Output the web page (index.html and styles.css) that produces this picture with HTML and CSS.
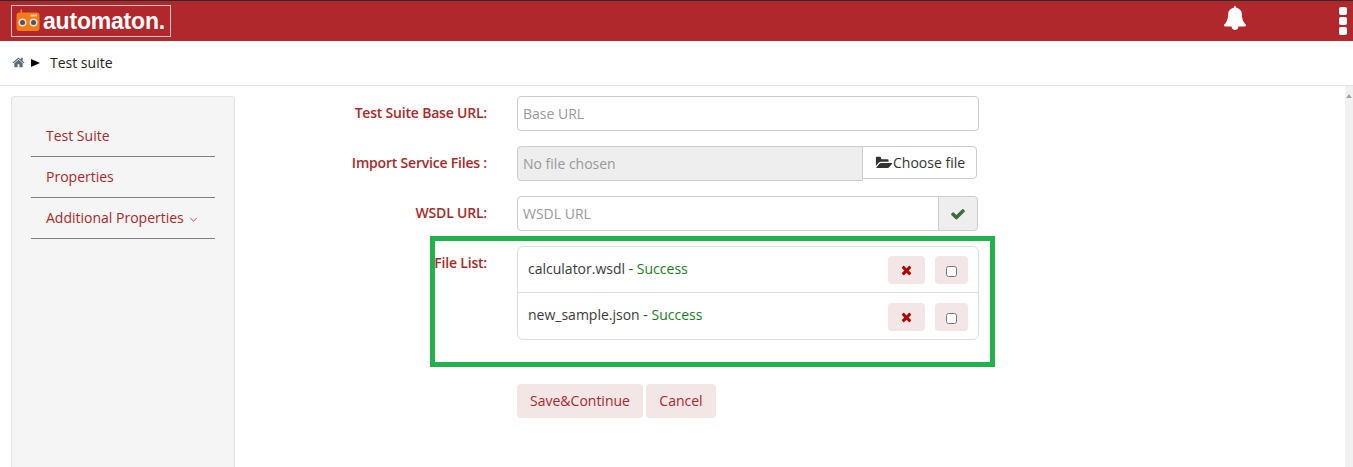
FILE: index.html
```html
<!DOCTYPE html>
<html lang="en">
<head>
<meta charset="utf-8">
<title>automaton</title>
<link rel="stylesheet" href="styles.css">
</head>
<body>
<header class="topbar">
  <div class="logo">
    <svg class="logo-icon" viewBox="0 0 24 24" width="24" height="24" aria-hidden="true">
      <rect x="0.500" y="3.500" width="23" height="18.500" rx="3" fill="#f47b16"/>
      <rect x="4.500" y="0.500" width="1.600" height="4" fill="#f47b16"/>
      <rect x="14.500" y="5.500" width="6.500" height="2" fill="#f9c9a0"/>
      <circle cx="6.500" cy="13.500" r="4" fill="#ddd"/>
      <circle cx="6.500" cy="13.500" r="2.500" fill="#555"/>
      <circle cx="17.500" cy="13.500" r="4" fill="#ddd"/>
      <circle cx="17.500" cy="13.500" r="2.500" fill="#555"/>
    </svg>
    <span class="logo-text">automaton.</span>
  </div>
  <svg class="bell" viewBox="0 0 1792 1792" width="24" height="24" aria-hidden="true"><path fill="#fff" d="M1728 1408q0 52-38 90t-90 38h-448q0 106-75 181t-181 75-181-75-75-181h-448q-52 0-90-38t-38-90q50-42 91-88t85-119.500 74.500-158.500 50-206 19.500-260q0-152 117-282.500t307-158.500q-8-19-8-39 0-40 28-68t68-28 68 28 28 68q0 20-8 39 190 28 307 158.500t117 282.500q0 139 19.500 260t50 206 74.500 158.500 85 119.500 91 88z"/></svg>
  <div class="kebab"><span></span><span></span><span></span></div>
</header>
<nav class="crumbs">
  <svg class="home" viewBox="0 0 1792 1792" width="13" height="13" aria-hidden="true"><path fill="#5f6b73" d="M1472 992v480q0 26-19 45t-45 19h-384v-384h-256v384h-384q-26 0-45-19t-19-45v-480q0-1 .5-3t.5-3l575-474 575 474q1 2 1 6zm223-69l-62 74q-8 9-21 11h-3q-13 0-21-7l-692-577-692 577q-12 8-24 7-13-2-21-11l-62-74q-8-10-7-23.500t11-21.500l719-599q32-26 76-26t76 26l244 204v-195q0-14 9-23t23-9h192q14 0 23 9t9 23v408l219 182q10 8 11 21.500t-7 23.500z"/></svg>
  <span class="crumb-arrow"></span>
  <span class="crumb-text">Test suite</span>
</nav>
<div class="page">
  <aside class="sidebar">
    <a class="side-item">Test Suite</a>
    <a class="side-item">Properties</a>
    <a class="side-item">Additional Properties
      <svg class="chev" viewBox="0 0 10 6" width="9" height="5" aria-hidden="true"><path d="M1 1l4 4 4-4" fill="none" stroke="#a52a2a" stroke-width="1"/></svg>
    </a>
  </aside>
  <main class="form">
    <div class="row">
      <label class="lbl">Test Suite Base URL:</label>
      <div class="control control-base"><span class="input ph">Base URL</span></div>
    </div>
    <div class="row">
      <label class="lbl">Import Service Files :</label>
      <div class="control control-file">
        <span class="input input-disabled ph">No file chosen</span>
        <span class="choose">
          <svg viewBox="0 0 1920 1792" width="19" height="18" aria-hidden="true"><path fill="#333" d="M1845 931q0-35-53-35h-1088q-40 0-85.500 21.500t-71.500 52.500l-294 363q-18 24-18 40 0 35 53 35h1088q40 0 86-22t71-53l294-363q18-22 18-40zm-1141-163h768v-160q0-40-28-68t-68-28h-576q-40 0-68-28t-28-68v-64q0-40-28-68t-68-28h-320q-40 0-68 28t-28 68v853l256-315q44-53 116-87.500t140-34.500z"/></svg>Choose file
        </span>
      </div>
    </div>
    <div class="row">
      <label class="lbl">WSDL URL:</label>
      <div class="control control-wsdl">
        <span class="input input-joined ph">WSDL URL</span>
        <span class="check">
          <svg viewBox="0 0 1792 1792" width="16" height="16" aria-hidden="true"><path fill="#3c6e3c" d="M1671 566q0 40-28 68l-724 724-136 136q-28 28-68 28t-68-28l-136-136-362-362q-28-28-28-68t28-68l136-136q28-28 68-28t68 28l294 295 656-657q28-28 68-28t68 28l136 136q28 28 28 68z"/></svg>
        </span>
      </div>
    </div>
    <div class="row row-files">
      <div class="annotation"></div>
      <label class="lbl lbl-files">File List:</label>
      <ul class="files">
        <li class="file">
          <span class="file-name">calculator.wsdl - <span class="ok">Success</span></span>
          <span class="act act-x"><svg viewBox="0 0 1408 1792" width="11" height="14" aria-hidden="true"><path fill="#b00000" d="M1298 1322q0 40-28 68l-136 136q-28 28-68 28t-68-28l-294-294-294 294q-28 28-68 28t-68-28l-136-136q-28-28-28-68t28-68l294-294-294-294q-28-28-28-68t28-68l136-136q28-28 68-28t68 28l294 294 294-294q28-28 68-28t68 28l136 136q28 28 28 68t-28 68l-294 294 294 294q28 28 28 68z"/></svg></span>
          <span class="act act-c"><input type="checkbox" class="cb"></span>
        </li>
        <li class="file">
          <span class="file-name">new_sample.json - <span class="ok">Success</span></span>
          <span class="act act-x"><svg viewBox="0 0 1408 1792" width="11" height="14" aria-hidden="true"><path fill="#b00000" d="M1298 1322q0 40-28 68l-136 136q-28 28-68 28t-68-28l-294-294-294 294q-28 28-68 28t-68-28l-136-136q-28-28-28-68t28-68l294-294-294-294q-28-28-28-68t28-68l136-136q28-28 68-28t68 28l294 294 294-294q28-28 68-28t68 28l136 136q28 28 28 68t-28 68l-294 294 294 294q28 28 28 68z"/></svg></span>
          <span class="act act-c"><input type="checkbox" class="cb"></span>
        </li>
      </ul>
    </div>
    <div class="actions">
      <button class="btn btn-save">Save&amp;Continue</button>
      <button class="btn btn-cancel">Cancel</button>
    </div>
  </main>
  <div class="scrollbar"><span class="scroll-up"></span></div>
</div>
</body>
</html>
```
FILE: styles.css
```css
* { box-sizing: border-box; }
html, body { margin: 0; padding: 0; height: 467px; overflow: hidden; }
body { font-family: "Open Sans", sans-serif; font-size: 14px; color: #333; background: #fff; }

.topbar { height: 41px; background: #b0282b; border-top: 1px solid #2b2b2b; display: flex; align-items: flex-start; position: relative; }
.logo { margin: 4px 0 0 11px; width: 160px; height: 32px; border: 1px solid #e2c4c4; display: flex; align-items: center; padding-left: 4px; gap: 3px; }
.logo-icon { flex: none; }
.logo-text { font-family: "Liberation Sans", Arial, sans-serif; font-weight: 700; font-size: 23px; letter-spacing: -0.2px; color: #fff; line-height: 30px; }
.bell { margin: 5px 0 0 1052px; }
.kebab { margin: 6px 0 0 92px; display: flex; flex-direction: column; gap: 2px; }
.kebab span { width: 8px; height: 8px; background: #fff; border-radius: 2px; }

.crumbs { height: 45px; border-bottom: 1px solid #e3e3e3; display: flex; align-items: center; padding: 0 0 2px 12px; }
.home { flex: none; }
.crumb-arrow { margin: 2px 0 0 6px; width: 0; height: 0; border-left: 9px solid #000; border-top: 4px solid transparent; border-bottom: 4px solid transparent; }
.crumb-text { margin-left: 10px; font-size: 14px; color: #222; }

.page { display: flex; height: 381px; position: relative; }
.sidebar { flex: none; width: 224px; margin: 10px 0 0 11px; padding: 19px 19px 0; background: #f5f5f5; border: 1px solid #e3e3e3; border-bottom: 0; border-radius: 4px 4px 0 0; }
.side-item { display: block; height: 41px; padding: 0 15px; line-height: 40px; color: #a52a2a; border-bottom: 1px solid #7f7f7f; white-space: nowrap; }
.chev { margin-left: 2px; vertical-align: 1px; }

.form { flex: none; width: 744px; margin: 10px 0 0 0; }
.row { display: flex; height: 50px; position: relative; }
.lbl { width: 252px; text-align: right; font-weight: 600; letter-spacing: -0.2px; color: #a52a2a; line-height: 34px; white-space: nowrap; }
.control { margin-left: 30px; height: 35px; display: flex; }
.control-base { width: 462px; }
.control-file { width: 460px; }
.control-wsdl { width: 461px; }
.input { flex: 1; height: 35px; border: 1px solid #ccc; border-radius: 4px; padding-left: 5px; line-height: 33px; background: #fff; }
.ph { color: #999; }
.input-disabled { background: #eee; border-radius: 4px 0 0 4px; }
.input-joined { border-radius: 4px 0 0 4px; }
.choose { flex: none; width: 115px; height: 33px; margin-left: -1px; border: 1px solid #ccc; border-radius: 0 4px 4px 0; background: #fff; display: flex; align-items: center; padding-left: 11px; color: #333; line-height: 1; white-space: nowrap; }
.check { flex: none; width: 40px; height: 35px; margin-left: -1px; border: 1px solid #ccc; border-radius: 0 4px 4px 0; background: #eee; display: flex; align-items: center; justify-content: center; }

.row-files { height: 138px; }
.annotation { position: absolute; left: 195px; top: -10px; width: 565px; height: 131px; border: 5px solid #22b14c; pointer-events: none; }
.lbl-files { line-height: 34px; height: 34px; }
.files { list-style: none; margin: 0 0 0 30px; padding: 0; width: 462px; height: 94px; border: 1px solid #ddd; border-radius: 6px; }
.file { height: 45px; display: flex; align-items: flex-start; padding: 9px 10px 0 10px; }
.file + .file { border-top: 1px solid #ddd; height: 47px; padding-top: 10px; }
.file-name { flex: 1; line-height: 25px; color: #3a3a3a; white-space: nowrap; }
.file + .file .file-name { line-height: 23px; }
.ok { color: #1d7a1d; }
.act { display: flex; align-items: center; justify-content: center; height: 28px; background: #f3e6e6; border-radius: 4px; }
.act-x { width: 37px; }
.act-c { width: 33px; margin-left: 10px; }
.cb { margin: 2px 0 0; width: 11px; height: 11px; }

.actions { display: flex; gap: 3px; padding-left: 282px; }
.btn { height: 34px; border: 0; border-radius: 4px; background: #f3e6e6; color: #a52a2a; font: 14px "Open Sans", sans-serif; padding: 0 0 2px; cursor: pointer; }
.btn-save { width: 126px; }
.btn-cancel { width: 70px; }

.scrollbar { position: absolute; right: 0; top: 0; bottom: 0; width: 8px; background: #f1f1f1; }
.scroll-up { display: block; margin: 8px 0 0 1px; width: 0; height: 0; border-left: 3px solid transparent; border-right: 3px solid transparent; border-bottom: 4px solid #a3a3a3; }
```
